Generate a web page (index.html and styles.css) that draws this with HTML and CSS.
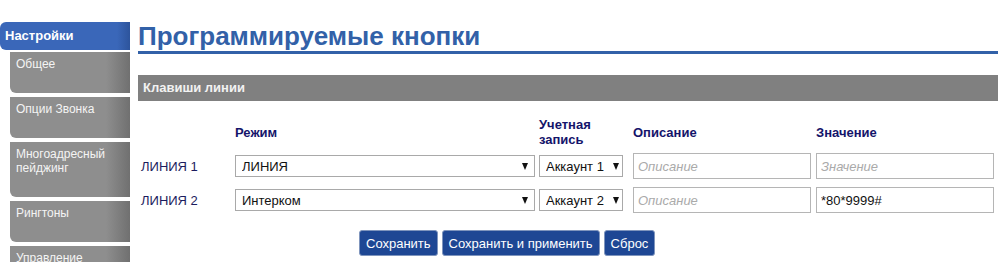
FILE: index.html
```html
<!DOCTYPE html>
<html lang="ru">
<head>
    <meta charset="UTF-8">
    <title>Программируемые кнопки</title>
    <link rel="stylesheet" href="styles.css">
</head>
<body>

<div class="page">
    <div class="sidebar">
        <div class="menuTitle">Настройки</div>
        <div class="menuItem">Общее</div>
        <div class="menuItem">Опции Звонка</div>
        <div class="menuItem tall">Многоадресный пейджинг</div>
        <div class="menuItem">Рингтоны</div>
        <div class="menuItem">Управление</div>
    </div>

    <div class="content">
        <h1 class="pageTitle">Программируемые кнопки</h1>
        <div class="sectionBar">Клавиши линии</div>

        <div class="keyGrid">
            <div></div>
            <div class="colHead">Режим</div>
            <div class="colHead">Учетная запись</div>
            <div class="colHead">Описание</div>
            <div class="colHead">Значение</div>

            <div class="lineName">ЛИНИЯ 1</div>
            <div class="selectBox wide"><select><option>ЛИНИЯ</option><option>Интерком</option></select></div>
            <div class="selectBox"><select><option>Аккаунт 1</option><option>Аккаунт 2</option></select></div>
            <div><input class="field" type="text" placeholder="Описание"></div>
            <div><input class="field" type="text" placeholder="Значение"></div>

            <div class="lineName">ЛИНИЯ 2</div>
            <div class="selectBox wide"><select><option>Интерком</option><option>ЛИНИЯ</option></select></div>
            <div class="selectBox"><select><option>Аккаунт 2</option><option>Аккаунт 1</option></select></div>
            <div><input class="field" type="text" placeholder="Описание"></div>
            <div><input class="field" type="text" value="*80*9999#"></div>
        </div>

        <div class="actions">
            <button>Сохранить</button>
            <button>Сохранить и применить</button>
            <button>Сброс</button>
        </div>
    </div>
</div>

</body>
</html>
```

FILE: styles.css
```css
body {
    margin: 0;
    background-color: #fff;
    font-family: 'Liberation Sans', Arial, sans-serif;
    font-size: 13px;
}

.page {
    display: flex;
    align-items: flex-start;
}

/* left menu */
.sidebar {
    width: 130px;
    padding-top: 22px;
    flex-shrink: 0;
}

.menuTitle {
    height: 28px;
    line-height: 28px;
    padding-left: 5px;
    margin-bottom: 2px;
    color: #fff;
    font-weight: bold;
    font-size: 13px;
    border-radius: 6px 0 0 6px;
    background: linear-gradient(to right, #3a67b9 0%, #3a67b9 90%, #2d549c 100%);
}

.menuItem {
    margin-left: 10px;
    margin-bottom: 4px;
    height: 36px;
    padding: 5px 0 0 6px;
    color: #f4f4f4;
    font-size: 12px;
    line-height: 14px;
    border-radius: 0 0 0 6px;
    background: linear-gradient(to right, #8e8e8e 0%, #8e8e8e 80%, #707070 100%);
}

.menuItem.tall {
    height: 50px;
}

/* main area */
.content {
    width: 860px;
    margin-left: 8px;
}

.pageTitle {
    margin: 0;
    padding-top: 22px;
    height: 29px;
    font-size: 26px;
    line-height: 29px;
    color: #3261a8;
    border-bottom: 3px solid #3261a8;
}

.sectionBar {
    margin-top: 21px;
    height: 26px;
    line-height: 26px;
    padding-left: 5px;
    background-color: #808080;
    color: #f2f2f2;
    font-weight: bold;
    font-size: 13px;
}

.keyGrid {
    display: grid;
    grid-template-columns: 94px 304px 94px 183px 179px;
    grid-template-rows: 24px 24px 24px;
    row-gap: 10px;
    margin-top: 19px;
    padding-left: 3px;
    align-items: center;
}

.colHead {
    font-weight: bold;
    color: #14146a;
    font-size: 13px;
    line-height: 15px;
    padding-right: 10px;
}

.lineName {
    color: #1c1c5e;
}

.selectBox {
    position: relative;
    height: 22px;
}

.selectBox select {
    appearance: none;
    -webkit-appearance: none;
    width: 84px;
    height: 22px;
    margin: 0;
    padding: 0 0 0 6px;
    border: 1px solid #a9a9a9;
    border-radius: 0;
    background: #fff;
    color: #111;
    font-family: 'Liberation Sans', Arial, sans-serif;
    font-size: 13px;
}

.selectBox.wide select {
    width: 300px;
}

.selectBox::after {
    content: "";
    position: absolute;
    top: 8px;
    left: 74px;
    border-left: 3.5px solid transparent;
    border-right: 3.5px solid transparent;
    border-top: 7px solid #111;
    pointer-events: none;
}

.selectBox.wide::after {
    left: 287px;
}

.field {
    box-sizing: border-box;
    width: 178px;
    height: 26px;
    margin: 0;
    padding: 0 4px;
    border: 1px solid #b5b5b5;
    font-family: 'Liberation Sans', Arial, sans-serif;
    font-size: 13px;
    color: #111;
}

.field::placeholder {
    color: #aaa;
    font-style: italic;
}

.actions {
    display: flex;
    gap: 4px;
    margin-top: 18px;
    padding-left: 221px;
}

.actions button {
    height: 26px;
    padding: 0 6px;
    background-color: #1e4794;
    color: #fff;
    border: 1px solid #7f95bd;
    border-radius: 3px;
    font-family: 'Liberation Sans', Arial, sans-serif;
    font-size: 13px;
}
```
